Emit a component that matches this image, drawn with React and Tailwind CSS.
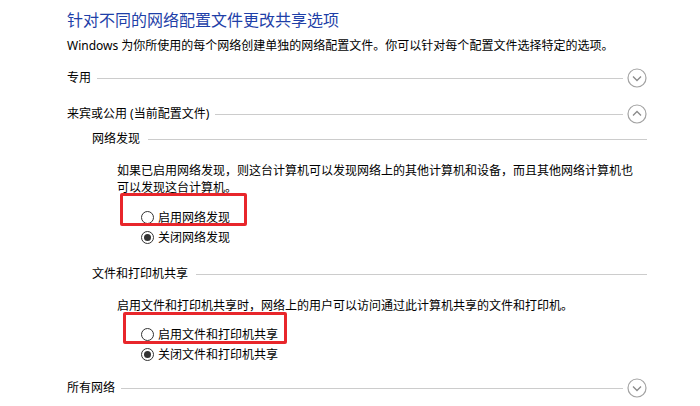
import React from 'react';

const font = { fontFamily: '"Noto Sans", "Noto Sans CJK SC", sans-serif' };

const Chevron = ({ up }) => (
    <svg width="20" height="20" viewBox="0 0 20 20" className="shrink-0">
        <circle cx="10" cy="10" r="9" fill="none" stroke="#a3a3a3" strokeWidth="1.2" />
        {up ? (
            <path d="M6 11.5 L10 7.5 L14 11.5" fill="none" stroke="#8a8a8a" strokeWidth="1.3" />
        ) : (
            <path d="M6 8.5 L10 12.5 L14 8.5" fill="none" stroke="#8a8a8a" strokeWidth="1.3" />
        )}
    </svg>
);

const SectionRow = ({ label, up, className = '' }) => (
    <div className={`flex h-[20px] items-center ${className}`}>
        <span className="text-[12px] leading-[20px] text-black">{label}</span>
        <div className="ml-[6px] h-px flex-1 bg-[#cccccc]" />
        <div className="ml-[4px]">
            <Chevron up={up} />
        </div>
    </div>
);

const SubHeader = ({ label, className = '' }) => (
    <div className={`ml-[25px] flex h-[18px] items-center ${className}`}>
        <span className="text-[12px] leading-[18px] text-black">{label}</span>
        <div className="ml-[8px] h-px flex-1 bg-[#cccccc]" />
    </div>
);

const Radio = ({ checked, label, className = '' }) => (
    <div className={`flex h-[19px] items-center ${className}`}>
        <span className="flex h-[13px] w-[13px] shrink-0 items-center justify-center rounded-full border border-[#333333] bg-white">
            {checked && <span className="h-[7px] w-[7px] rounded-full bg-[#333333]" />}
        </span>
        <span className="ml-[4px] text-[12px] leading-[19px] text-black">{label}</span>
    </div>
);

export default function App() {
    return (
        <div className="h-[406px] w-[700px] overflow-hidden bg-white" style={font}>
            <div className="ml-[67px] w-[580px] pt-[10px]">
                <h1 className="h-[20px] text-[16px] leading-[20px] font-normal text-[#1e3fa8]">
                    针对不同的网络配置文件更改共享选项
                </h1>
                <p className="mt-[7px] h-[18px] text-[12px] leading-[18px] text-black">
                    Windows 为你所使用的每个网络创建单独的网络配置文件。你可以针对每个配置文件选择特定的选项。
                </p>

                <SectionRow label="专用" className="mt-[13px]" />
                <SectionRow label="来宾或公用 (当前配置文件)" up className="mt-[16px]" />

                {/* 网络发现 */}
                <SubHeader label="网络发现" className="mt-[6px]" />
                <p className="mt-[14px] ml-[50px] w-[520px] text-[12px] leading-[17px] text-black">
                    如果已启用网络发现，则这台计算机可以发现网络上的其他计算机和设备，而且其他网络计算机也可以发现这台计算机。
                </p>
                <div className="relative mt-[12px] ml-[74px]">
                    <Radio label="启用网络发现" className="h-[18px]" />
                    <Radio checked label="关闭网络发现" className="mt-[1px] h-[18px]" />
                    <div className="pointer-events-none absolute top-[-15px] left-[-21px] h-[33px] w-[127px] rounded-[2px] border-[3px] border-[#e8262b]" />
                </div>

                {/* 文件和打印机共享 */}
                <SubHeader label="文件和打印机共享" className="mt-[18px]" />
                <p className="mt-[14px] ml-[50px] h-[17px] text-[12px] leading-[17px] text-black">
                    启用文件和打印机共享时，网络上的用户可以访问通过此计算机共享的文件和打印机。
                </p>
                <div className="relative mt-[11px] ml-[74px]">
                    <Radio label="启用文件和打印机共享" />
                    <Radio checked label="关闭文件和打印机共享" className="mt-[1px]" />
                    <div className="pointer-events-none absolute top-[-13px] left-[-18px] h-[32px] w-[164px] rounded-[2px] border-[3px] border-[#e8262b]" />
                </div>

                <SectionRow label="所有网络" className="mt-[14px]" />
            </div>
        </div>
    );
}
